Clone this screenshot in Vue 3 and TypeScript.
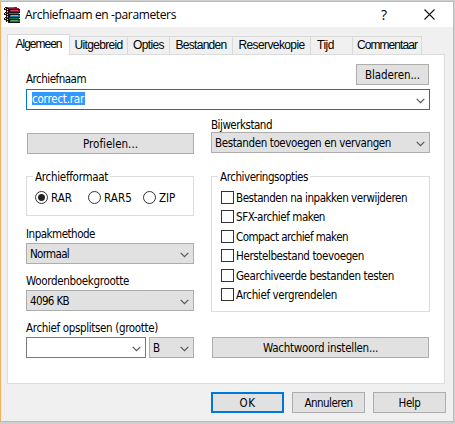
<script setup lang="ts">
import { ref } from 'vue'

interface Tab { label: string; size: number; text: number }
interface Choice { label: string; text: number }
interface Book { y: number; cover: string; shine: string }

const books: Book[] = [
  { y: 10, cover: '#0c7a3c', shine: '#4fae78' },
  { y: 5, cover: '#1878b8', shine: '#62c8e4' },
  { y: 0, cover: '#96103c', shine: '#c8486c' },
]
const tabs: Tab[] = [
  { label: 'Algemeen', size: 63, text: 46 },
  { label: 'Uitgebreid', size: 58, text: 48 },
  { label: 'Opties', size: 42, text: 31 },
  { label: 'Bestanden', size: 63, text: 51 },
  { label: 'Reservekopie', size: 78, text: 66 },
  { label: 'Tijd', size: 42, text: 17 },
  { label: 'Commentaar', size: 69, text: 60 },
]
const formats: Choice[] = [
  { label: 'RAR', text: 21 },
  { label: 'RAR5', text: 28 },
  { label: 'ZIP', text: 16 },
]
const options: Choice[] = [
  { label: 'Bestanden na inpakken verwijderen', text: 171 },
  { label: 'SFX-archief maken', text: 89 },
  { label: 'Compact archief maken', text: 112 },
  { label: 'Herstelbestand toevoegen', text: 128 },
  { label: 'Gearchiveerde bestanden testen', text: 158 },
  { label: 'Archief vergrendelen', text: 101 },
]
const activeTab = ref('Algemeen')
const format = ref('RAR')
const checked = ref<string[]>([])

function toggle(name: string) {
  checked.value = checked.value.includes(name)
    ? checked.value.filter((n) => n !== name)
    : [...checked.value, name]
}

// Spreads the letters of a label so that it takes the given width in pixels.
const vFit = {
  mounted(el: HTMLElement, binding: { value: number }) {
    const count = (el.textContent ?? '').length
    const natural = el.getBoundingClientRect().width
    if (count) el.style.letterSpacing = `${(binding.value - natural) / count}px`
  },
}
</script>

<template>
  <div class="desktop">
    <div class="window">
      <header class="titlebar">
        <svg class="logo" width="17" height="17" viewBox="0 0 17 17" shape-rendering="crispEdges">
          <g v-for="book in books" :key="book.y" :transform="`translate(0 ${book.y})`">
            <path d="M1 1h11l4 2v4H5L0 4V2z" fill="#1c1010" />
            <path d="M2 1h10l4 2H6z" :fill="book.cover" />
            <path d="M3 1h6l2 1H5z" :fill="book.shine" />
            <path d="M6 4h10v2H6z" :fill="book.cover" />
            <path d="M7 4h7v1H7z" :fill="book.shine" />
            <path d="M1 2h1v1H1zM3 3h1v1H3zM1 4h1v1H1zM3 5h1v1H3z" fill="#e4d6b0" />
          </g>
        </svg>
        <span class="title"><span v-fit="151">Archiefnaam en -parameters</span></span>
        <span class="help">?</span>
        <svg class="close" width="11" height="11" viewBox="0 0 11 11">
          <path d="M.5.5l10 10M10.500.5l-10 10" stroke="#111" stroke-width="1.1" fill="none" />
        </svg>
      </header>

      <nav class="tabs">
        <div
          v-for="tab in tabs"
          :key="tab.label"
          class="tab"
          :class="{ active: tab.label === activeTab, left: tab.label === 'Tijd' }"
          :style="{ width: tab.size + 'px' }"
          @click="activeTab = tab.label"
        >
          <span v-fit="tab.text">{{ tab.label }}</span>
        </div>
      </nav>

      <main class="page">
        <div class="name-row">
          <div class="label"><span v-fit="60">Archiefnaam</span></div>
          <div class="button browse"><span v-fit="55">Bladeren...</span></div>
        </div>
        <div class="combo edit focused">
          <span class="selection"><span v-fit="52">correct.rar</span></span>
          <svg class="arrow" width="9" height="6" viewBox="0 0 9 6"><path d="M.7.8l3.800 3.800L8.300.8" /></svg>
        </div>

        <div class="columns">
          <section class="column">
            <div class="button profiles"><span v-fit="55">Profielen...</span></div>
            <div class="group formats">
              <div class="legend"><span v-fit="73">Archiefformaat</span></div>
              <div v-for="item in formats" :key="item.label" class="radio" @click="format = item.label">
                <i class="circle" :class="{ on: format === item.label }"></i>
                <span v-fit="item.text">{{ item.label }}</span>
              </div>
            </div>
            <div class="label method"><span v-fit="69">Inpakmethode</span></div>
            <div class="combo">
              <span v-fit="39">Normaal</span>
              <svg class="arrow" width="9" height="6" viewBox="0 0 9 6"><path d="M.7.8l3.800 3.800L8.300.8" /></svg>
            </div>
            <div class="label lower"><span v-fit="103">Woordenboekgrootte</span></div>
            <div class="combo">
              <span v-fit="39">4096 KB</span>
              <svg class="arrow" width="9" height="6" viewBox="0 0 9 6"><path d="M.7.8l3.800 3.800L8.300.8" /></svg>
            </div>
            <div class="label lower"><span v-fit="132">Archief opsplitsen (grootte)</span></div>
            <div class="split">
              <div class="combo edit volume">
                <svg class="arrow" width="9" height="6" viewBox="0 0 9 6"><path d="M.7.8l3.800 3.800L8.300.8" /></svg>
              </div>
              <div class="combo unit">
                <span>B</span>
                <svg class="arrow" width="9" height="6" viewBox="0 0 9 6"><path d="M.7.8l3.800 3.800L8.300.8" /></svg>
              </div>
            </div>
          </section>

          <section class="column">
            <div class="label update"><span v-fit="61">Bijwerkstand</span></div>
            <div class="combo">
              <span v-fit="176">Bestanden toevoegen en vervangen</span>
              <svg class="arrow" width="9" height="6" viewBox="0 0 9 6"><path d="M.7.8l3.800 3.800L8.300.8" /></svg>
            </div>
            <div class="group options">
              <div class="legend"><span v-fit="88">Archiveringsopties</span></div>
              <div v-for="item in options" :key="item.label" class="check" @click="toggle(item.label)">
                <i class="box" :class="{ on: checked.includes(item.label) }"></i>
                <span v-fit="item.text">{{ item.label }}</span>
              </div>
            </div>
            <div class="button password"><span v-fit="115">Wachtwoord instellen...</span></div>
          </section>
        </div>
      </main>

      <footer class="actions">
        <div class="button default"><span v-fit="16">OK</span></div>
        <div class="button"><span v-fit="48">Annuleren</span></div>
        <div class="button"><span v-fit="22">Help</span></div>
      </footer>
    </div>
  </div>
</template>

<style>
body {
  margin: 0;
  overflow: hidden;
}
</style>

<style scoped>
* {
  box-sizing: border-box;
}
.desktop {
  width: 455px;
  height: 424px;
  padding: 1px 1px 2px 0;
  background: #cfcfcf;
  font: 11.5px/14px "DejaVu Sans Condensed", "DejaVu Sans", sans-serif;
  color: #000;
  white-space: nowrap;
  cursor: default;
}
.window {
  width: 454px;
  height: 421px;
  border: 1px solid #f3b061;
  background: #f0f0f0;
}
.titlebar {
  display: flex;
  height: 25px;
  background: #fff;
}
.logo {
  margin: 4px 0 0 3px;
}
.title {
  flex: 1;
  margin: 4px 0 0 4px;
  font: 12px/17px "Open Sans", "Noto Sans", sans-serif;
}
.help {
  margin: 4px 37px 0 0;
  font: 14px/17px "Open Sans", "Noto Sans", sans-serif;
}
.close {
  margin: 7px 18px 0 0;
}
.tabs {
  display: flex;
  align-items: flex-end;
  height: 27px;
  padding-left: 6px;
  position: relative;
  z-index: 1;
  font: 12px/15px "Liberation Sans", Arial, sans-serif;
}
.tab {
  height: 18px;
  padding-top: 1px;
  border: 1px solid #d9d9d9;
  border-width: 1px 1px 0 0;
  text-align: center;
}
.tab.left {
  padding-left: 6px;
  text-align: left;
}
.tab.active {
  height: 21px;
  margin-bottom: -1px;
  padding-top: 2px;
  border-left-width: 1px;
  background: #fff;
}
.page {
  width: 438px;
  height: 330px;
  margin-left: 6px;
  padding: 10px 14px 0 18px;
  border: 1px solid #dcdcdc;
  background: #fff;
}
.name-row {
  display: flex;
  justify-content: space-between;
  height: 24px;
  width: 404px;
}
.name-row .label {
  padding-top: 7px;
}
.label {
  height: 14px;
}
.button {
  display: flex;
  justify-content: center;
  width: 73px;
  height: 21px;
  padding-top: 3px;
  border: 1px solid #adadad;
  background: #e1e1e1;
}
.browse {
  margin: -1px 1px 0 0;
}
.combo {
  display: flex;
  justify-content: space-between;
  height: 21px;
  padding: 3px 4px 0 3px;
  border: 1px solid #adadad;
  background: #e1e1e1;
}
.combo.edit {
  background: #fff;
  border-color: #7a7a7a;
}
.combo.focused {
  width: 404px;
  padding: 2px 4px 0 5px;
  border-color: #0078d7;
}
.selection {
  width: 53px;
  height: 13px;
  background: #3399ff;
  color: #fff;
}
.arrow {
  margin: 5px 0 0 auto;
  fill: none;
  stroke: #555;
  stroke-width: 1.2;
}
.focused .arrow {
  margin-top: 6px;
}
.columns {
  display: grid;
  grid-template-columns: 168px 219px;
  column-gap: 17px;
}
.profiles {
  width: 167px;
  margin: 23px 0 22px 1px;
}
.group {
  border: 1px solid #dcdcdc;
}
.legend {
  width: max-content;
  height: 14px;
  margin-top: -7px;
  padding: 0 2px;
  background: #fff;
}
.formats {
  display: grid;
  grid-template-columns: 53px 55px 40px;
  align-content: start;
  height: 40px;
  padding-left: 8px;
}
.formats .legend {
  grid-column: 1 / -1;
  margin-left: -2px;
}
.radio {
  display: flex;
  gap: 3px;
  height: 15px;
  margin-top: 7px;
}
.circle {
  width: 13px;
  height: 13px;
  border: 1px solid #333;
  border-radius: 50%;
  background: #fff;
}
.circle.on {
  background: radial-gradient(circle, #222 3px, #fff 4px);
}
.method {
  margin-top: 11px;
  margin-bottom: 2px;
}
.lower {
  margin: 10px 0 2px;
}
.split {
  display: flex;
  gap: 3px;
}
.volume {
  width: 120px;
}
.unit {
  width: 45px;
}
.update {
  margin: 8px 0 0;
}
.options {
  height: 136px;
  margin-top: 23px;
  padding-left: 9px;
}
.options .legend {
  margin-left: -3px;
  margin-bottom: 7px;
}
.check {
  display: flex;
  gap: 2px;
  height: 19.4px;
}
.box {
  width: 13px;
  height: 13px;
  border: 1px solid #333;
  background: #fff;
}
.box.on {
  box-shadow: inset 0 0 0 2px #fff;
  background: #222;
}
.password {
  width: 217px;
  margin: 25px 0 0 1px;
}
.actions {
  display: flex;
  gap: 8px;
  margin: 8px 0 0 210px;
}
.default {
  padding-top: 2px;
  border: 2px solid #0078d7;
}
</style>
